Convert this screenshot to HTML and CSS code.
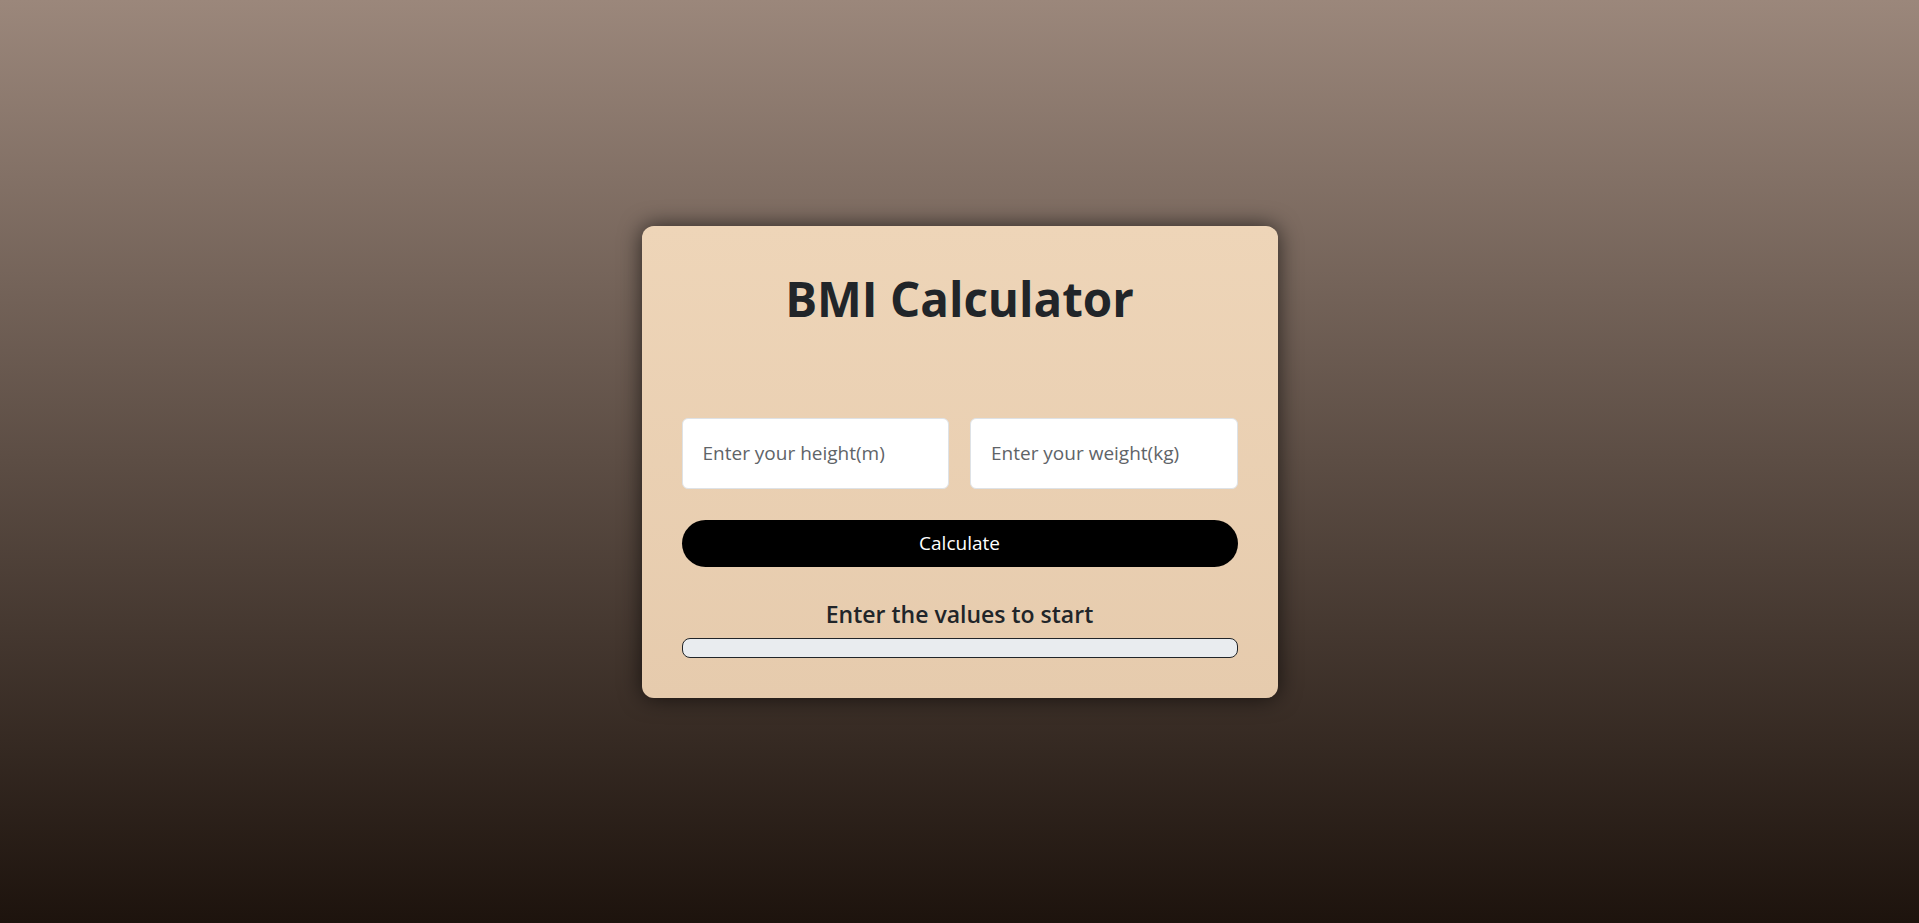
FILE: index.html
```html
<!DOCTYPE html>
<html lang="en">
<head>
<meta charset="utf-8">
<title>BMI Calculator</title>
<link rel="stylesheet" href="styles.css">
</head>
<body>
<main class="page">
  <section class="card">
    <h1 class="title">BMI Calculator</h1>
    <div class="inputs">
      <input class="field" type="text" placeholder="Enter your height(m)">
      <input class="field" type="text" placeholder="Enter your weight(kg)">
    </div>
    <button class="calc-btn" type="button">Calculate</button>
    <p class="result">Enter the values to start</p>
    <div class="progress"><div class="progress-fill" style="width:0%"></div></div>
  </section>
</main>
</body>
</html>
```

FILE: styles.css
```css
* { box-sizing: border-box; }
html, body { height: 100%; }
body {
  margin: 0;
  font-family: "Open Sans", "Noto Sans", sans-serif;
  background: linear-gradient(180deg, #9b877b 0%, #1d130d 100%);
  color: #212529;
}
.page {
  height: 100%;
  display: flex;
  align-items: center;
  justify-content: center;
}
.card {
  width: 636px;
  height: 472px;
  padding: 40px;
  border-radius: 12px;
  background: linear-gradient(180deg, #eed5b8 0%, #e6cbad 100%);
  box-shadow: 0 0 22px rgba(0, 0, 0, 0.65);
  display: flex;
  flex-direction: column;
}
.title {
  margin: 0;
  text-align: center;
  font-size: 47.5px;
  font-weight: 700;
  line-height: 1.2;
  padding-top: 4px;
  color: #212529;
}
.inputs {
  margin-top: 91px;
  display: flex;
  gap: 21px;
}
.field {
  flex: 1;
  min-width: 0;
  height: 71px;
  padding: 0 20px;
  font-family: inherit;
  font-size: 19px;
  color: #212529;
  background: #fff;
  border: 1px solid #dee2e6;
  border-radius: 6px;
  outline: none;
}
.field::placeholder { color: #5f6468; }
.calc-btn {
  margin-top: 31px;
  height: 49px;
  border: none;
  border-radius: 25px;
  background: #000;
  color: #fff;
  font-family: inherit;
  font-size: 19px;
}
.result {
  margin: 34px 0 0;
  text-align: center;
  font-size: 23px;
  font-weight: 600;
  line-height: 1.2;
  color: #212529;
}
.progress {
  margin-top: 9px;
  height: 20px;
  border: 1.5px solid #212529;
  border-radius: 8px;
  background: #e9ecef;
  overflow: hidden;
}
.progress-fill { height: 100%; background: #198754; }
```
